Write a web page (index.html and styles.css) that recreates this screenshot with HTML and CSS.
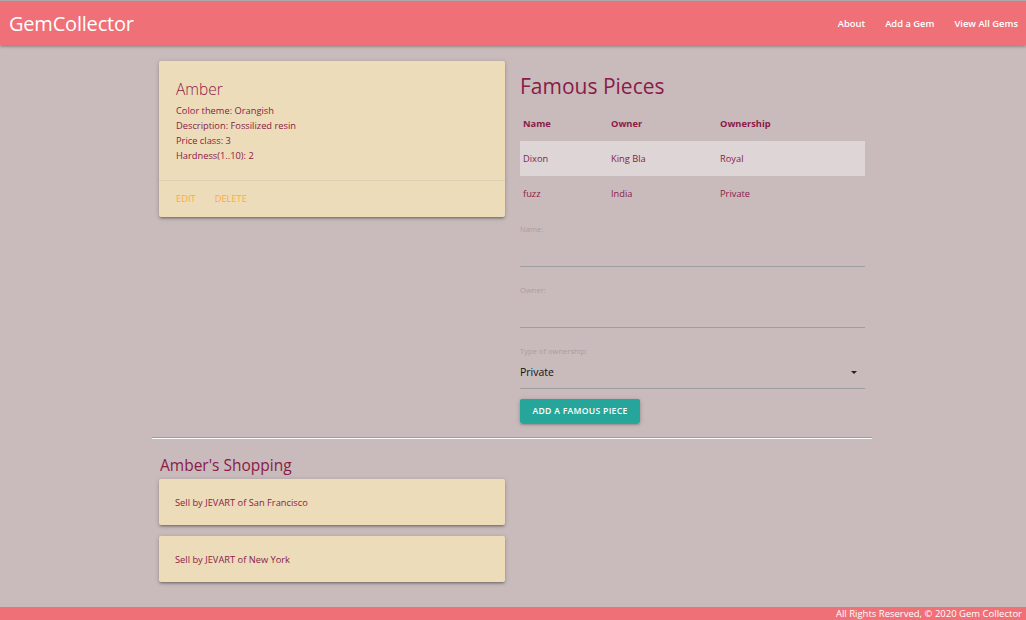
FILE: index.html
```html
<!DOCTYPE html>
<html lang="en">
<head>
<meta charset="utf-8">
<title>GemCollector</title>
<link rel="stylesheet" href="styles.css">
</head>
<body>
<header class="topbar">
  <a class="brand" href="#">GemCollector</a>
  <nav class="nav">
    <a href="#">About</a>
    <a href="#">Add a Gem</a>
    <a href="#">View All Gems</a>
  </nav>
</header>
<main class="container">
  <div class="row">
    <section class="col col-left">
      <div class="card">
        <div class="card-content">
          <div class="card-title">Amber</div>
          <p>Color theme: Orangish</p>
          <p>Description: Fossilized resin</p>
          <p>Price class: 3</p>
          <p>Hardness(1..10): 2</p>
        </div>
        <div class="card-action">
          <a href="#">EDIT</a>
          <a href="#">DELETE</a>
        </div>
      </div>
    </section>
    <section class="col col-right">
      <h4 class="section-title">Famous Pieces</h4>
      <table class="pieces">
        <colgroup><col class="c1"><col class="c2"><col class="c3"></colgroup>
        <thead>
          <tr><th>Name</th><th>Owner</th><th>Ownership</th></tr>
        </thead>
        <tbody>
          <tr class="hl"><td>Dixon</td><td>King Bla</td><td>Royal</td></tr>
          <tr><td>fuzz</td><td>India</td><td>Private</td></tr>
        </tbody>
      </table>
      <form class="piece-form">
        <div class="field">
          <label>Name:</label>
          <div class="input"></div>
        </div>
        <div class="field">
          <label>Owner:</label>
          <div class="input"></div>
        </div>
        <div class="field">
          <label>Type of ownership:</label>
          <div class="input select"><span>Private</span><span class="caret"></span></div>
        </div>
        <button type="button" class="btn">ADD A FAMOUS PIECE</button>
      </form>
    </section>
  </div>
  <hr class="divider">
  <h5 class="shop-title">Amber's Shopping</h5>
  <div class="row">
    <section class="col col-left">
      <div class="card shop-card">Sell by JEVART of San Francisco</div>
      <div class="card shop-card">Sell by JEVART of New York</div>
    </section>
  </div>
</main>
<footer class="footer">All Rights Reserved, © 2020 Gem Collector</footer>
</body>
</html>
```

FILE: styles.css
```css
* { box-sizing: border-box; }
html, body { margin: 0; padding: 0; }
body {
  background: #c9bbbb;
  font-family: "Open Sans", "Noto Sans", sans-serif;
  color: #8a1a48;
  min-height: 100vh;
  display: flex;
  flex-direction: column;
}
a { text-decoration: none; }

.topbar {
  height: 45px;
  border-top: 1px solid #a9a9a9;
  background: #f07077;
  display: flex;
  align-items: center;
  justify-content: space-between;
  padding: 0 8px 0 9px;
  box-shadow: 0 2px 2px rgba(0,0,0,.14), 0 1px 4px rgba(0,0,0,.2);
  position: relative;
  z-index: 2;
}
.brand {
  color: #fff;
  font-size: 20px;
  letter-spacing: -0.2px;
}
.nav { display: flex; gap: 20px; }
.nav a {
  color: #fff;
  font-size: 9.4px;
  font-weight: 600;
}

.container {
  width: 720px;
  margin-left: calc((100% - 722px) / 2);
  flex: 1;
}
.row { display: flex; }
.container > .row:first-child { padding-top: 16px; }
.col { width: 360px; padding: 0 7px; }
.col-right { padding: 0 7px 0 8px; }

.card {
  background: #ecdcb9;
  border-radius: 2px;
  box-shadow: 0 2px 2px rgba(0,0,0,.14), 0 3px 1px -2px rgba(0,0,0,.12), 0 1px 5px rgba(0,0,0,.2);
}
.card-content { padding: 17px 17px 17px; }
.card-title {
  font-size: 15.5px;
  font-weight: 300;
  line-height: 22px;
  margin-bottom: 3px;
}
.card-content p {
  margin: 0;
  font-size: 9.3px;
  line-height: 15px;
}
.card-action {
  border-top: 1px solid rgba(160,160,160,.2);
  padding: 11px 17px 12px;
  line-height: 13px;
  display: flex;
  gap: 19px;
}
.card-action a {
  color: #ffab40;
  font-size: 9.3px;
}

.section-title {
  margin: 11px 0 6px;
  font-size: 21px;
  font-weight: 400;
  line-height: 28px;
}
.pieces {
  width: 100%;
  border-collapse: collapse;
  table-layout: fixed;
}
.pieces .c1 { width: 88px; }
.pieces .c2 { width: 109px; }
.pieces th, .pieces td {
  text-align: left;
  padding: 10px 3px;
  font-size: 9.3px;
  line-height: 15px;
}
.pieces th { font-weight: 700; }
.pieces td { font-weight: 400; }
.pieces tr.hl { background: #ddd5d6; }

.piece-form { display: flex; flex-direction: column; align-items: flex-start; }
.field { width: 100%; margin-top: 18px; }
.field:first-child { margin-top: 13px; }
.field label {
  display: block;
  font-size: 7.6px;
  line-height: 10px;
  color: #ab9c9d;
}
.input {
  height: 33px;
  border-bottom: 1px solid #9e9e9e;
}
.select {
  display: flex;
  align-items: center;
  justify-content: space-between;
  padding: 0 8px 0 0;
  color: #111;
  font-size: 10.5px;
}
.caret {
  width: 0; height: 0;
  border-left: 3.5px solid transparent;
  border-right: 3.5px solid transparent;
  border-top: 3.5px solid #222;
}
.btn {
  margin-top: 10px;
  height: 24px;
  width: 120px;
  border: none;
  border-radius: 2px;
  background: #26a69a;
  color: #fff;
  font-family: inherit;
  font-size: 8.6px;
  font-weight: 600;
  letter-spacing: 0.3px;
  padding: 0;
  box-shadow: 0 2px 2px rgba(0,0,0,.14), 0 3px 1px -2px rgba(0,0,0,.12), 0 1px 5px rgba(0,0,0,.2);
}

.divider {
  margin: 14px 0 0;
  border: none;
  border-top: 1px solid #9e9e9e;
  border-bottom: 1px solid #fafafa;
  height: 0;
}
.shop-title {
  margin: 16px 0 4px 8px;
  font-size: 15.5px;
  font-weight: 400;
  line-height: 20px;
}
.shop-card {
  height: 46px;
  display: flex;
  align-items: center;
  padding: 0 16px;
  font-size: 9.3px;
  margin-bottom: 11px;
}

.footer {
  height: 13px;
  background: #f07077;
  color: #fff;
  font-size: 9.5px;
  line-height: 13px;
  text-align: right;
  padding-right: 4px;
}
```
